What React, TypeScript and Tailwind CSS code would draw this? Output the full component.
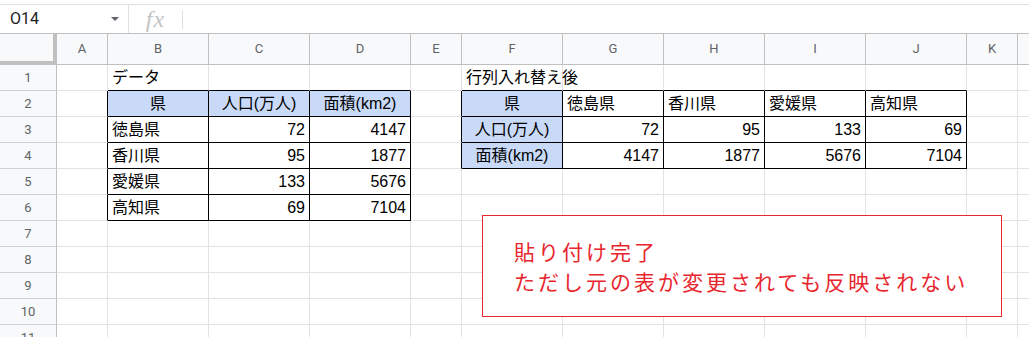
import React from 'react';

type Align = 'left' | 'right' | 'center';
type Cell = { text: string; align?: Align; fill?: boolean };

const LETTERS = ['A', 'B', 'C', 'D', 'E', 'F', 'G', 'H', 'I', 'J', 'K', 'L'];
const ROW_COUNT = 11;

// sheet contents keyed by A1 address
const CELLS: Record<string, Cell> = {
  B1: { text: 'データ' },
  F1: { text: '行列入れ替え後' },

  B2: { text: '県', align: 'center', fill: true },
  C2: { text: '人口(万人)', align: 'center', fill: true },
  D2: { text: '面積(km2)', align: 'center', fill: true },
  B3: { text: '徳島県' },
  C3: { text: '72', align: 'right' },
  D3: { text: '4147', align: 'right' },
  B4: { text: '香川県' },
  C4: { text: '95', align: 'right' },
  D4: { text: '1877', align: 'right' },
  B5: { text: '愛媛県' },
  C5: { text: '133', align: 'right' },
  D5: { text: '5676', align: 'right' },
  B6: { text: '高知県' },
  C6: { text: '69', align: 'right' },
  D6: { text: '7104', align: 'right' },

  F2: { text: '県', align: 'center', fill: true },
  G2: { text: '徳島県' },
  H2: { text: '香川県' },
  I2: { text: '愛媛県' },
  J2: { text: '高知県' },
  F3: { text: '人口(万人)', align: 'center', fill: true },
  G3: { text: '72', align: 'right' },
  H3: { text: '95', align: 'right' },
  I3: { text: '133', align: 'right' },
  J3: { text: '69', align: 'right' },
  F4: { text: '面積(km2)', align: 'center', fill: true },
  G4: { text: '4147', align: 'right' },
  H4: { text: '1877', align: 'right' },
  I4: { text: '5676', align: 'right' },
  J4: { text: '7104', align: 'right' },
};

// ranges that carry black borders (col 1 = A)
function inTable(row: number, col: number) {
  if (row >= 2 && row <= 6 && col >= 2 && col <= 4) return true;
  if (row >= 2 && row <= 4 && col >= 6 && col <= 10) return true;
  return false;
}

const alignClass: Record<Align, string> = {
  left: 'justify-start',
  right: 'justify-end',
  center: 'justify-center',
};

function FormulaBar() {
  return (
    <div className="h-[33px] pt-[4px] bg-white">
      <div className="h-[29px] border-t border-[#e0e0e0] flex items-center">
        <div className="w-[129px] h-full flex items-center justify-between pl-[10px] pr-[9px] border-r border-[#e0e0e0]">
          <span className="font-['Roboto',sans-serif] text-[16px] text-[#202124]">O14</span>
          <svg width="8" height="4" viewBox="0 0 8 4">
            <polygon points="0,0 8,0 4,4" fill="#5f6368" />
          </svg>
        </div>
        <div className="w-[53px] flex items-center justify-center">
          <span className="font-['Liberation_Serif',serif] italic text-[24px] leading-none tracking-[1px] text-[#c4c4c4]">
            fx
          </span>
        </div>
        <div className="h-[19px] w-px bg-[#e0e0e0]" />
      </div>
    </div>
  );
}

function DataCell({ row, col }: { row: number; col: number }) {
  const cell = CELLS[`${LETTERS[col - 1]}${row}`];
  const right = inTable(row, col) || inTable(row, col + 1);
  const bottom = inTable(row, col) || inTable(row + 1, col);

  // plain cells stay transparent so long text can spill into the next one
  return (
    <div
      className={[
        'h-[26px] flex items-center px-[4px] whitespace-nowrap text-[16px] text-black',
        "font-['Liberation_Sans','Noto_Sans_CJK_JP',sans-serif]",
        cell?.fill ? 'bg-[#c9daf8]' : 'bg-transparent',
        alignClass[cell?.align ?? 'left'],
        right ? 'border-r border-r-black' : 'border-r border-r-[#e2e2e2]',
        bottom ? 'border-b border-b-black' : 'border-b border-b-[#e2e2e2]',
      ].join(' ')}
    >
      {cell?.text}
    </div>
  );
}

export default function App() {
  const rows = Array.from({ length: ROW_COUNT }, (_, i) => i + 1);

  return (
    <div className="relative w-[1029px] h-[337px] overflow-hidden bg-white">
      <FormulaBar />

      <div className="grid grid-cols-[57px_51px_101px_101px_101px_51px_101px_101px_101px_101px_101px_51px_101px] w-max">
        {/* column headers; L only peeks in at the right edge */}
        <div className="h-[32px] bg-[#f8f9fa] border-t border-t-[#c0c0c0] border-r-4 border-r-[#c0c0c0] border-b-4 border-b-[#c0c0c0]" />
        {LETTERS.map((l) => (
          <div
            key={l}
            className="h-[32px] bg-[#f8f9fa] border-t border-t-[#c0c0c0] border-b border-b-[#c0c0c0] border-r border-r-[#c0c0c0] flex items-center justify-center font-['Roboto',sans-serif] text-[13px] text-[#5f6368]"
          >
            {l === 'L' ? null : l}
          </div>
        ))}

        {rows.map((r) => (
          <React.Fragment key={r}>
            <div className="h-[26px] bg-[#f8f9fa] border-r border-r-[#c0c0c0] border-b border-b-[#d0d0d0] flex items-center justify-center font-['Roboto',sans-serif] text-[13px] text-[#5f6368]">
              {r}
            </div>
            {LETTERS.map((_, i) => (
              <DataCell key={i} row={r} col={i + 1} />
            ))}
          </React.Fragment>
        ))}
      </div>

      {/* note box floating over the sheet */}
      <div className="absolute left-[482px] top-[215px] w-[520px] h-[102px] border border-[#e8262d] bg-white flex flex-col justify-center pl-[31px] font-['Noto_Sans_CJK_JP',sans-serif] text-[21px] leading-[30px] tracking-[3px] text-[#e8262d]">
        <div>貼り付け完了</div>
        <div>ただし元の表が変更されても反映されない</div>
      </div>
    </div>
  );
}
